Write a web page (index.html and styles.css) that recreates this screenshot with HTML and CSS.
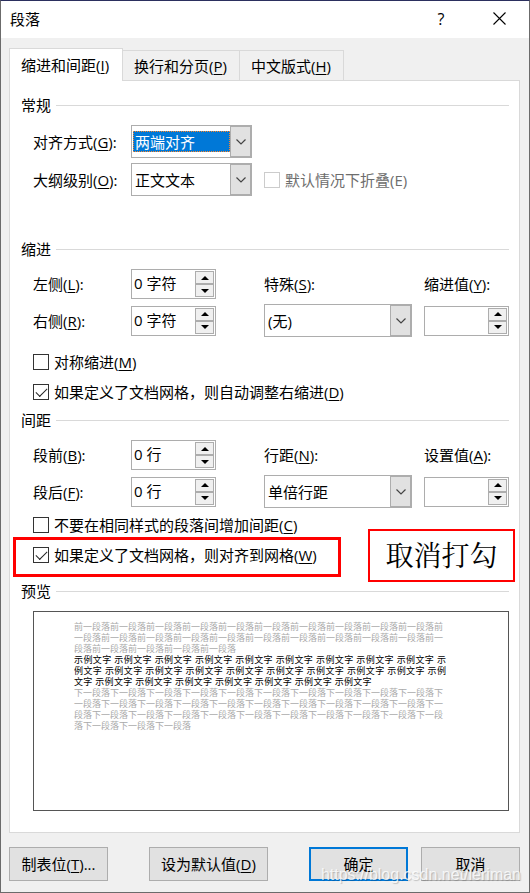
FILE: index.html
```html
<!DOCTYPE html>
<html lang="zh-CN">
<head>
    <meta charset="UTF-8">
    <meta name="viewport" content="width=device-width, initial-scale=1.0">
    <title>段落</title>
    <link rel="stylesheet" href="styles.css">
</head>
<body>
    <div class="dialog">
        <header class="titlebar">
            <h1>段落</h1>
            <button class="title-button help" type="button" aria-label="帮助">?</button>
            <button class="title-button" type="button" aria-label="关闭">
                <svg width="13" height="13" viewBox="0 0 13 13"><path d="M0.5 0.5L12.5 12.5M12.5 0.5L0.5 12.5" fill="none" stroke="#000" stroke-width="1.1"/></svg>
            </button>
        </header>

        <main>
            <div class="tabs" role="tablist">
                <button class="tab active" type="button" role="tab">缩进和间距(<u>I</u>)</button>
                <button class="tab" type="button" role="tab">换行和分页(<u>P</u>)</button>
                <button class="tab" type="button" role="tab">中文版式(<u>H</u>)</button>
            </div>

            <div class="panel">
                <section class="general">
                    <h2>常规</h2>
                    <div class="fields">
                        <label for="align">对齐方式(<u>G</u>):</label>
                        <div class="combo focused">
                            <select id="align"><option>两端对齐</option></select>
                            <span class="arrow"><svg width="10" height="6" viewBox="0 0 10 6"><path d="M0.5 0.5L5 5L9.5 0.5"/></svg></span>
                        </div>
                        <label class="level" for="level">大纲级别(<u>O</u>):</label>
                        <div class="combo">
                            <select id="level"><option>正文文本</option></select>
                            <span class="arrow"><svg width="10" height="6" viewBox="0 0 10 6"><path d="M0.5 0.5L5 5L9.5 0.5"/></svg></span>
                        </div>
                        <label class="check disabled"><input type="checkbox" disabled>默认情况下折叠(E)</label>
                    </div>
                </section>

                <section class="indent">
                    <h2>缩进</h2>
                    <div class="fields">
                        <label for="left">左侧(<u>L</u>):</label>
                        <div class="spinner">
                            <input id="left" type="text" value="0 字符">
                            <div class="steps">
                                <button type="button" aria-label="增加"><svg width="8" height="4" viewBox="0 0 8 4"><path d="M4 0L8 4H0Z"/></svg></button>
                                <button type="button" aria-label="减少"><svg width="8" height="4" viewBox="0 0 8 4"><path d="M0 0H8L4 4Z"/></svg></button>
                            </div>
                        </div>
                        <label for="special">特殊(<u>S</u>):</label>
                        <label for="indent-by">缩进值(<u>Y</u>):</label>

                        <label for="right">右侧(<u>R</u>):</label>
                        <div class="spinner">
                            <input id="right" type="text" value="0 字符">
                            <div class="steps">
                                <button type="button" aria-label="增加"><svg width="8" height="4" viewBox="0 0 8 4"><path d="M4 0L8 4H0Z"/></svg></button>
                                <button type="button" aria-label="减少"><svg width="8" height="4" viewBox="0 0 8 4"><path d="M0 0H8L4 4Z"/></svg></button>
                            </div>
                        </div>
                        <div class="combo">
                            <select id="special"><option>(无)</option></select>
                            <span class="arrow"><svg width="10" height="6" viewBox="0 0 10 6"><path d="M0.5 0.5L5 5L9.5 0.5"/></svg></span>
                        </div>
                        <div class="spinner">
                            <input id="indent-by" type="text" value="">
                            <div class="steps">
                                <button type="button" aria-label="增加"><svg width="8" height="4" viewBox="0 0 8 4"><path d="M4 0L8 4H0Z"/></svg></button>
                                <button type="button" aria-label="减少"><svg width="8" height="4" viewBox="0 0 8 4"><path d="M0 0H8L4 4Z"/></svg></button>
                            </div>
                        </div>
                    </div>
                    <div class="checks">
                        <label class="check"><input type="checkbox"><span>对称缩进(<u>M</u>)</span></label>
                        <label class="check"><input type="checkbox" checked><span>如果定义了文档网格，则自动调整右缩进(<u>D</u>)</span></label>
                    </div>
                </section>

                <section class="spacing">
                    <h2>间距</h2>
                    <div class="fields">
                        <label for="before">段前(<u>B</u>):</label>
                        <div class="spinner">
                            <input id="before" type="text" value="0 行">
                            <div class="steps">
                                <button type="button" aria-label="增加"><svg width="8" height="4" viewBox="0 0 8 4"><path d="M4 0L8 4H0Z"/></svg></button>
                                <button type="button" aria-label="减少"><svg width="8" height="4" viewBox="0 0 8 4"><path d="M0 0H8L4 4Z"/></svg></button>
                            </div>
                        </div>
                        <label for="line">行距(<u>N</u>):</label>
                        <label for="line-at">设置值(<u>A</u>):</label>

                        <label for="after">段后(<u>F</u>):</label>
                        <div class="spinner">
                            <input id="after" type="text" value="0 行">
                            <div class="steps">
                                <button type="button" aria-label="增加"><svg width="8" height="4" viewBox="0 0 8 4"><path d="M4 0L8 4H0Z"/></svg></button>
                                <button type="button" aria-label="减少"><svg width="8" height="4" viewBox="0 0 8 4"><path d="M0 0H8L4 4Z"/></svg></button>
                            </div>
                        </div>
                        <div class="combo">
                            <select id="line"><option>单倍行距</option></select>
                            <span class="arrow"><svg width="10" height="6" viewBox="0 0 10 6"><path d="M0.5 0.5L5 5L9.5 0.5"/></svg></span>
                        </div>
                        <div class="spinner">
                            <input id="line-at" type="text" value="">
                            <div class="steps">
                                <button type="button" aria-label="增加"><svg width="8" height="4" viewBox="0 0 8 4"><path d="M4 0L8 4H0Z"/></svg></button>
                                <button type="button" aria-label="减少"><svg width="8" height="4" viewBox="0 0 8 4"><path d="M0 0H8L4 4Z"/></svg></button>
                            </div>
                        </div>
                    </div>
                    <div class="checks">
                        <label class="check"><input type="checkbox"><span>不要在相同样式的段落间增加间距(<u>C</u>)</span></label>
                        <div class="marked">
                            <label class="check"><input type="checkbox" checked><span>如果定义了文档网格，则对齐到网格(<u>W</u>)</span></label>
                            <div class="mark"></div>
                            <div class="note">取消打勾</div>
                        </div>
                    </div>
                </section>

                <section class="preview">
                    <h2>预览</h2>
                    <div class="page">
                        <p>前一段落前一段落前一段落前一段落前一段落前一段落前一段落前一段落前一段落前一段落前一段落前一段落前一段落前一段落前一段落前一段落前一段落前一段落前一段落前一段落前一段落前一段落前一段落前一段落前一段落</p>
                        <p class="sample">
                            <span>示例文字 示例文字 示例文字 示例文字 示例文字 示例文字 示例文字 示例文字 示例文字 示</span>
                            <span>例文字 示例文字 示例文字 示例文字 示例文字 示例文字 示例文字 示例文字 示例文字 示例</span>
                            <span class="last">文字 示例文字 示例文字 示例文字 示例文字 示例文字 示例文字 示例文字</span>
                        </p>
                        <p>下一段落下一段落下一段落下一段落下一段落下一段落下一段落下一段落下一段落下一段落下一段落下一段落下一段落下一段落下一段落下一段落下一段落下一段落下一段落下一段落下一段落下一段落下一段落下一段落下一段落下一段落下一段落下一段落下一段落下一段落下一段落下一段落下一段落下一段落</p>
                    </div>
                </section>
            </div>
        </main>

        <footer>
            <button class="button" type="button">制表位(<u>T</u>)...</button>
            <button class="button wide" type="button">设为默认值(<u>D</u>)</button>
            <button class="button primary" type="button">确定</button>
            <button class="button" type="button">取消</button>
        </footer>
        <div class="watermark">https://blog.csdn.net/leriman</div>
    </div>
</body>
</html>
```
FILE: styles.css
```css
* {
    box-sizing: border-box;
}
body {
    margin: 0;
    font-family: "Open Sans", "Noto Sans CJK SC", sans-serif;
    font-size: 15px;
    line-height: 20px;
    color: #000;
}
button, input, select {
    font: inherit;
    color: inherit;
    margin: 0;
    padding: 0;
}
u {
    text-underline-offset: 2px;
    text-decoration-thickness: 1px;
}
.dialog {
    position: relative;
    min-height: 100vh;
    background-color: #f0f0f0;
    border: 1px solid #6b6b6b;
    border-top-color: #2b2f5e;
}
.titlebar {
    display: flex;
    align-items: center;
    height: 37px;
    padding: 0 1px 2px 9px;
    background-color: #fff;
}
.titlebar h1 {
    flex: 1;
    margin: 0;
    font-size: 15px;
    font-weight: 400;
}
.title-button {
    display: flex;
    align-items: center;
    justify-content: center;
    width: 58px;
    height: 35px;
    border: none;
    background: none;
}
.help {
    font-size: 16px;
}
main {
    padding: 10px 9px 0 8px;
}

/* Tabs */
.tabs {
    display: flex;
    align-items: flex-end;
}
.tab {
    height: 30px;
    padding: 0 12px 0 11px;
    border: 1px solid #d9d9d9;
    border-left: none;
    border-bottom: none;
    background-color: #f0f0f0;
    white-space: nowrap;
}
.tab.active {
    position: relative;
    height: 33px;
    margin-bottom: -1px;
    padding-right: 13px;
    padding-bottom: 1px;
    border-left: 1px solid #d9d9d9;
    background-color: #fff;
}
.panel {
    padding: 14px 10px 21px 11px;
    border: 1px solid #d9d9d9;
    background-color: #fff;
}

/* Sections */
h2 {
    display: flex;
    align-items: center;
    gap: 5px;
    margin: 0 0 10px;
    font-size: 15px;
    font-weight: 400;
}
h2::after {
    content: "";
    flex: 1;
    height: 1px;
    background-color: #d9d9d9;
}
.fields {
    display: grid;
    grid-template-columns: 86px 121px 1fr 85px;
    grid-template-rows: 30px 33px;
    gap: 5px 12px;
    align-items: center;
    padding-left: 12px;
    white-space: nowrap;
}
.general .fields {
    grid-template-rows: 33px 33px;
}
.level {
    grid-column: 1;
}
.indent {
    margin-top: 43px;
}
.spacing {
    margin-top: 3px;
}
.preview {
    margin-top: 11px;
}

/* Drop-downs */
.combo {
    display: flex;
    align-items: center;
    height: 33px;
    border: 1px solid #adadad;
    background-color: #fff;
}
.combo select {
    flex: 1;
    min-width: 0;
    height: 21px;
    margin-left: 1px;
    padding-left: 2px;
    appearance: none;
    border: none;
    border-radius: 0;
    background: none;
    line-height: 20px;
}
.focused select {
    padding-left: 1px;
    border: 1px dotted #ff8728;
    background-color: #0078d7;
    color: #fff;
    line-height: 18px;
}
.arrow {
    display: flex;
    align-items: center;
    justify-content: center;
    width: 21px;
    height: 31px;
    border: 1px solid #adadad;
    background-color: #e1e1e1;
}
.arrow path {
    fill: none;
    stroke: #444;
    stroke-width: 1.2;
}

/* Spin boxes */
.spinner {
    display: flex;
    width: 85px;
    height: 30px;
    padding: 1px;
    border: 1px solid #adadad;
    background-color: #fff;
}
.spinner input {
    flex: 1;
    min-width: 0;
    height: 23px;
    padding-left: 1px;
    border: none;
    outline: none;
    background: none;
}
.steps {
    display: flex;
    flex-direction: column;
    width: 19px;
}
.steps button {
    display: flex;
    flex: 1;
    align-items: center;
    justify-content: center;
    border: 1px solid #adadad;
    background-color: #f0f0f0;
}

/* Tick boxes */
.checks {
    padding-left: 12px;
}
.indent .checks {
    margin-top: 10px;
}
.spacing .checks {
    margin-top: 2px;
}
.check {
    display: flex;
    align-items: center;
    gap: 5px;
    height: 30px;
}
.check input {
    display: grid;
    place-items: center;
    flex: none;
    width: 16px;
    height: 16px;
    appearance: none;
    border: 1px solid #333;
    background-color: #fff;
}
.check input:checked::before {
    content: "";
    width: 10px;
    height: 5px;
    margin-top: -3px;
    border-left: 1px solid #222;
    border-bottom: 1px solid #222;
    transform: rotate(-45deg);
}
.disabled {
    color: #6d6d6d;
}
.disabled input {
    border-color: #ccc;
}

/* Red call-outs */
.marked {
    position: relative;
}
.mark {
    position: absolute;
    top: -3px;
    left: -20px;
    width: 328px;
    height: 40px;
    border: 3px solid #f00;
    pointer-events: none;
}
.note {
    position: absolute;
    top: -11px;
    right: -6px;
    width: 147px;
    padding: 3px 0 6px;
    border: 2px solid #f00;
    background-color: #fff;
    font-family: "Noto Serif CJK SC", "Noto Sans CJK SC", serif;
    font-size: 28px;
    line-height: 40px;
    text-align: center;
}

/* Preview */
.page {
    height: 200px;
    margin-left: 12px;
    padding: 9px 62px 0 40px;
    border: 1px solid #555;
    font-size: 9px;
    line-height: 11px;
    color: #aaa;
}
.page p {
    margin: 0;
}
.sample {
    color: #000;
}
.sample span {
    display: block;
    white-space: nowrap;
    text-align-last: justify;
}
.sample .last {
    width: 80%;
}

/* Bottom buttons */
footer {
    display: flex;
    justify-content: flex-end;
    gap: 13px;
    padding: 14px 9px 11px 8px;
}
.button {
    width: 99px;
    height: 34px;
    border: 1px solid #adadad;
    background-color: #e1e1e1;
    white-space: nowrap;
}
.button:first-child {
    margin-right: auto;
}
.wide {
    width: 119px;
    margin-right: 28px;
}
.primary {
    border: 2px solid #0078d7;
}
.watermark {
    position: absolute;
    right: 8px;
    bottom: 7px;
    font-family: "Liberation Sans", sans-serif;
    font-size: 16px;
    color: rgba(255, 255, 255, 0.8);
    text-shadow: 1px 1px 1px rgba(0, 0, 0, 0.2);
    pointer-events: none;
}
```
